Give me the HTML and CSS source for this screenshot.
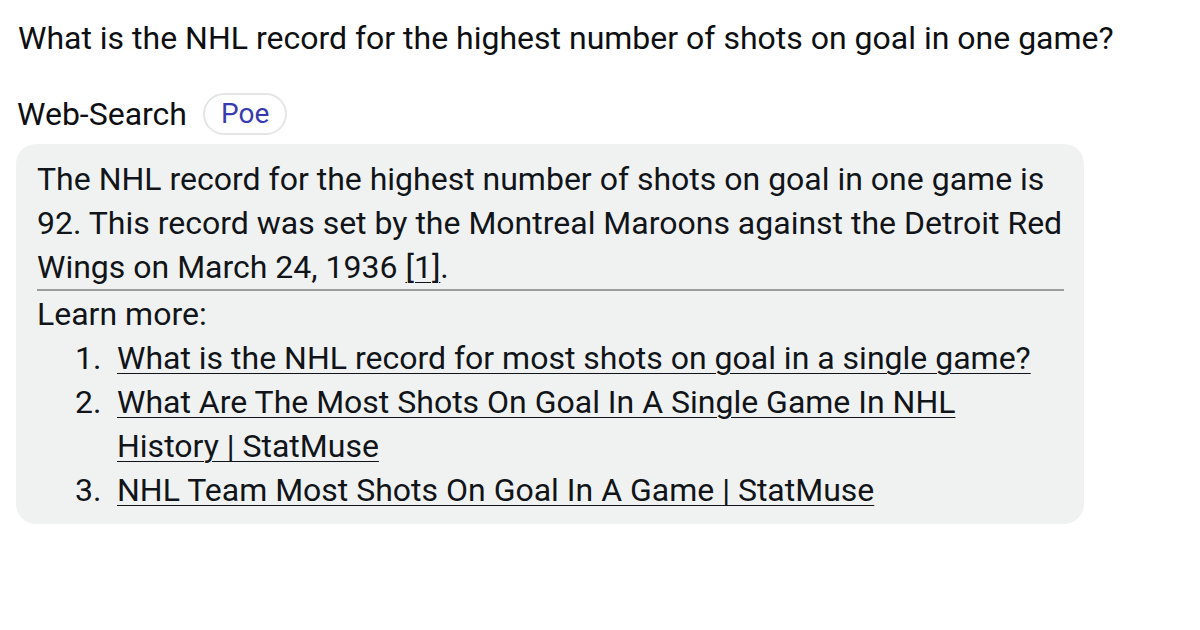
FILE: index.html
```html
<!DOCTYPE html>
<html>
<head>
<meta charset="utf-8">
<link rel="stylesheet" href="styles.css">
</head>
<body>
<div class="page">
  <div class="question">What is the NHL record for the highest number of shots on goal in one game?</div>
  <div class="bot-row">
    <span class="bot-name">Web-Search</span>
    <span class="badge">Poe</span>
  </div>
  <div class="bubble">
    <p class="answer">The NHL record for the highest number of shots on goal in one game is 92. This record was set by the Montreal Maroons against the Detroit Red Wings on March 24, 1936 <a href="#">[1]</a>.</p>
    <hr class="divider">
    <p class="learn">Learn more:</p>
    <ol class="links">
      <li><a href="#">What is the NHL record for most shots on goal in a single game?</a></li>
      <li><a href="#">What Are The Most Shots On Goal In A Single Game In NHL History | StatMuse</a></li>
      <li><a href="#">NHL Team Most Shots On Goal In A Game | StatMuse</a></li>
    </ol>
  </div>
</div>
</body>
</html>
```
FILE: styles.css
```css
html, body {
  margin: 0;
  padding: 0;
  background: #ffffff;
}
body {
  font-family: Roboto, "Liberation Sans", sans-serif;
  font-size: 32px;
  color: #111418;
}
.page {
  padding: 16px 16px 0 16px;
}
.question {
  line-height: 44px;
  padding-left: 2px;
  color: #0d0f12;
}
.bot-row {
  display: flex;
  align-items: center;
  gap: 16px;
  margin-top: 32px;
  height: 44px;
}
.bot-name {
  padding-left: 1px;
  color: #0d0f12;
}
.badge {
  font-size: 28px;
  color: #3a3ab0;
  border: 2px solid #e3e5e6;
  border-radius: 22px;
  padding: 0 16px;
  line-height: 38px;
}
.bubble {
  width: 1068px;
  box-sizing: border-box;
  margin-top: 8px;
  background: #f0f2f2;
  border-radius: 20px;
  padding: 13px 20px 12px 21px;
}
.answer {
  margin: 0;
  line-height: 44px;
}
.bubble a {
  color: #111418;
  text-decoration: underline;
  text-underline-offset: 4px;
  text-decoration-thickness: 1px;
}
.divider {
  border: 0;
  border-top: 2px solid #9a9c9d;
  margin: 0 0 1px 0;
}
.learn {
  margin: 0;
  line-height: 44px;
}
.links {
  margin: 0;
  padding-left: 38px;
  line-height: 44px;
  list-style: none;
  counter-reset: item;
}
.links li {
  display: flex;
  counter-increment: item;
}
.links li::before {
  content: counter(item) ".";
  flex: none;
  width: 42px;
}
```
